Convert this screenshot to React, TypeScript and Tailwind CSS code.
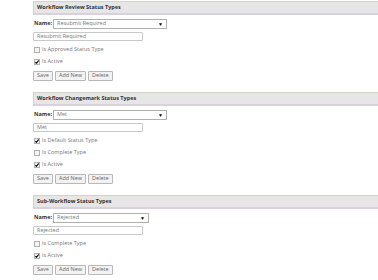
import React from 'react';

type Check = { label: string; checked: boolean };
type Section = { title: string; value: string; selectWidth: string; checks: Check[] };

const sections: Section[] = [
  {
    title: 'Workflow Review Status Types',
    value: 'Resubmit Required',
    selectWidth: 'w-[114px]',
    checks: [
      { label: 'Is Approved Status Type', checked: false },
      { label: 'Is Active', checked: true },
    ],
  },
  {
    title: 'Workflow Changemark Status Types',
    value: 'Met',
    selectWidth: 'w-[114px]',
    checks: [
      { label: 'Is Default Status Type', checked: true },
      { label: 'Is Complete Type', checked: false },
      { label: 'Is Active', checked: true },
    ],
  },
  {
    title: 'Sub-Workflow Status Types',
    value: 'Rejected',
    selectWidth: 'w-[96px]',
    checks: [
      { label: 'Is Complete Type', checked: false },
      { label: 'Is Active', checked: true },
    ],
  },
];

const Box: React.FC<{ checked: boolean }> = ({ checked }) => (
  <span className="relative w-[6px] h-[6px] border border-[#b0b0b0] bg-[#f4f4f4]">
    {checked && (
      <svg className="absolute left-0 top-0" width="4" height="4" viewBox="0 0 4 4">
        <path d="M0.3 2 L1.5 3.3 L3.7 0.4" stroke="#111" strokeWidth="1.1" fill="none" />
      </svg>
    )}
  </span>
);

const Btn: React.FC<{ label: string }> = ({ label }) => (
  <span className="h-[10px] px-[3px] border border-[#b8b8b8] bg-[#f2f2f2] rounded-[1px] flex items-center text-[#666]">
    {label}
  </span>
);

const StatusSection: React.FC<{ s: Section }> = ({ s }) => (
  <div className="mb-[11px]">
    <div className="h-[14px] border-t border-t-[#d3d3cc] border-b-2 border-b-[#d9d2dc] border-l border-l-[#d0d0d0] bg-[#e6e6e6] flex items-center pl-[3px] font-bold text-[#333]">
      {s.title}
    </div>
    <div className="flex items-center mt-[4px] h-[10px]">
      <span className="font-bold text-[#333] shrink-0 whitespace-nowrap pl-[1px] mr-[1px]">Name:</span>
      <span className={`${s.selectWidth} h-[10px] border border-[#b0b0b0] bg-white flex items-center justify-between pl-[3px] pr-[3px] text-[#777]`}>
        {s.value}
        <span className="text-black text-[5px]">▼</span>
      </span>
    </div>
    <div className="mt-[3px] w-[110px] h-[9px] border border-[#c8c8c8] rounded-[1px] bg-white flex items-center pl-[3px] text-[#777]">
      {s.value}
    </div>
    <div className="mt-[3px]">
      {s.checks.map((c, i) => (
        <div key={i} className="h-[12px] flex items-center gap-[2px] pl-[1px] text-[#777]">
          <Box checked={c.checked} />
          <span>{c.label}</span>
        </div>
      ))}
    </div>
    <div className="mt-[3px] flex gap-[2px]">
      <Btn label="Save" />
      <Btn label="Add New" />
      <Btn label="Delete" />
    </div>
  </div>
);

const App: React.FC = () => {
  return (
    <div
      className="w-[378px] h-[280px] overflow-hidden bg-white pl-[33px] pt-[1px] text-[5.5px] leading-none"
      style={{ fontFamily: '"Open Sans", "Liberation Sans", sans-serif' }}
    >
      {sections.map((s) => (
        <StatusSection key={s.title} s={s} />
      ))}
    </div>
  );
};

export default App;
